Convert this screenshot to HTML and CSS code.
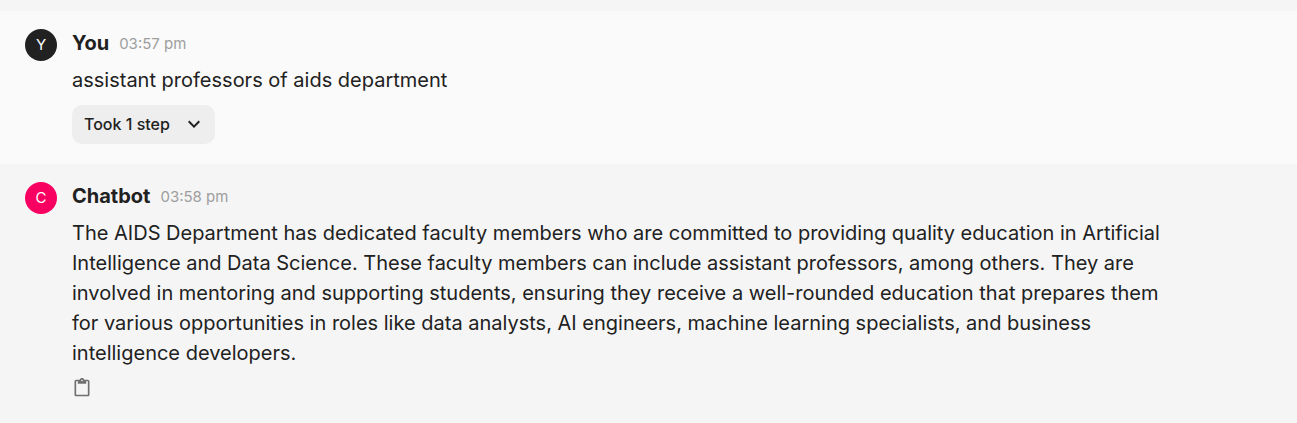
FILE: index.html
```html
<!DOCTYPE html>
<html lang="en">
<head>
<meta charset="utf-8">
<title>Chatbot</title>
<link rel="stylesheet" href="styles.css">
</head>
<body>
<main class="chat">
  <article class="message message-user">
    <div class="avatar avatar-user">Y</div>
    <div class="body">
      <header class="meta"><span class="author">You</span><time class="time">03:57 pm</time></header>
      <p class="text">assistant professors of aids department</p>
      <button class="steps" type="button">Took 1 step
        <svg class="chevron" viewBox="0 0 24 24" aria-hidden="true"><path d="M7.41 8.59 12 13.17l4.59-4.58L18 10l-6 6-6-6z"/></svg>
      </button>
    </div>
  </article>
  <article class="message message-bot">
    <div class="avatar avatar-bot">C</div>
    <div class="body">
      <header class="meta"><span class="author">Chatbot</span><time class="time">03:58 pm</time></header>
      <p class="text">The AIDS Department has dedicated faculty members who are committed to providing quality education in Artificial Intelligence and Data Science. These faculty members can include assistant professors, among others. They are involved in mentoring and supporting students, ensuring they receive a well-rounded education that prepares them for various opportunities in roles like data analysts, AI engineers, machine learning specialists, and business intelligence developers.</p>
      <button class="copy" type="button" aria-label="Copy">
        <svg class="clipboard" viewBox="0 0 24 24" aria-hidden="true"><path d="M19 2h-4.180C14.400.840 13.300 0 12 0S9.600.840 9.180 2H5c-1.100 0-2 .900-2 2v16c0 1.100.900 2 2 2h14c1.100 0 2-.900 2-2V4c0-1.100-.900-2-2-2m-7 0c.550 0 1 .450 1 1s-.450 1-1 1-1-.450-1-1 .450-1 1-1m7 18H5V4h2v3h10V4h2z"/></svg>
      </button>
    </div>
  </article>
</main>
</body>
</html>
```
FILE: styles.css
```css
* { box-sizing: border-box; }
body {
  margin: 0;
  min-height: 100vh;
  background: #f5f5f5;
  color: #212121;
  font-family: Inter, "Liberation Sans", sans-serif;
}
.chat { padding-top: 11px; }
.message {
  display: flex;
  gap: 15px;
  padding: 17px 128px 20px 25px;
}
.message-user { background: #fafafa; }
.avatar {
  display: flex;
  flex: none;
  align-items: center;
  justify-content: center;
  width: 32px;
  height: 32px;
  margin-top: 1px;
  padding-bottom: 1px;
  border-radius: 50%;
  color: #fff;
  font-size: 15px;
}
.avatar-user { background: #212121; }
.avatar-bot { background: #f80061; }
.body { flex: 1; min-width: 0; }
.meta {
  display: flex;
  align-items: center;
  gap: 10px;
  height: 30px;
}
.author { font-size: 20px; font-weight: 700; }
.time { color: #9e9e9e; font-size: 15px; }
.text {
  margin: 7px 0 0;
  font-size: 20px;
  line-height: 30px;
}
.steps {
  display: flex;
  align-items: center;
  gap: 12px;
  height: 39px;
  margin-top: 10px;
  padding: 0 9px 2px 12px;
  border: 0;
  border-radius: 10px;
  background: #eee;
  color: #212121;
  font: 500 16px Inter, "Liberation Sans", sans-serif;
}
.chevron { width: 24px; height: 24px; fill: currentColor; }
.copy {
  display: block;
  margin-top: 10px;
  padding: 0;
  border: 0;
  background: none;
  color: #707070;
}
.clipboard { display: block; width: 20px; height: 20px; fill: currentColor; }
```
